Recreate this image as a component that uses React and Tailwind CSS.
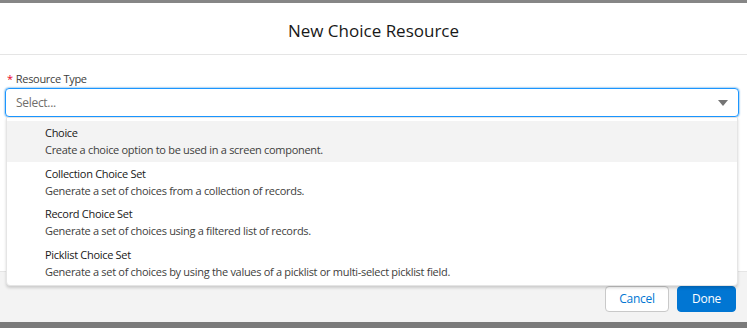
import React from "react";

const options = [
  { t: "Choice", d: "Create a choice option to be used in a screen component.", active: true },
  { t: "Collection Choice Set", d: "Generate a set of choices from a collection of records." },
  { t: "Record Choice Set", d: "Generate a set of choices using a filtered list of records." },
  { t: "Picklist Choice Set", d: "Generate a set of choices by using the values of a picklist or multi-select picklist field." },
];

export default function App() {
  return (
    <div className="w-[747px] h-[328px] flex flex-col bg-white overflow-hidden" style={{ fontFamily: '"Open Sans", sans-serif' }}>
      <div className="h-[3px] bg-[#868686]" />
      <div className="h-[52px] flex items-center justify-center border-b border-[#e5e5e5]">
        <h1 className="text-[17px] text-[#181818] leading-none mt-[3px]">New Choice Resource</h1>
      </div>
      <div className="flex-1 px-[5px] pt-[16px] relative">
        <div className="text-[11px] tracking-[-0.3px] text-[#3e3e3c] leading-[16px] flex items-center pl-[2px]">
          <span className="text-[#ea001e] mr-[3px]">*</span>Resource Type
        </div>
        <div className="relative mt-[1px] w-[734px]">
          <div className="h-[29px] border border-[#1b96ff] rounded-[4px] shadow-[0_0_2px_#0176d3] flex items-center justify-between pl-[10px] pr-[9px]">
            <span className="text-[12px] tracking-[-0.3px] text-[#706e6b]">Select...</span>
            <svg width="12" height="8" viewBox="0 0 12 8"><path d="M1 1h10L6 7z" fill="#747474" /></svg>
          </div>
          <div className="absolute left-[1px] top-[29px] w-[732px] bg-white border border-[#e5e5e5] rounded-b-[4px] shadow-[0_2px_3px_rgba(0,0,0,0.16)] pt-[3px] pb-[2px] z-10">
            {options.map((o) => (
              <div key={o.t} className={`h-[40.5px] pl-[38px] pt-[1px] flex flex-col justify-center ${o.active ? "bg-[#f3f3f3]" : ""}`}>
                <div className="text-[11px] tracking-[-0.3px] leading-[16px] text-[#181818]">{o.t}</div>
                <div className="text-[11px] tracking-[-0.3px] leading-[17px] text-[#3e3e3c]">{o.d}</div>
              </div>
            ))}
          </div>
        </div>
      </div>
      <div className="h-[51px] bg-[#f3f3f3] border-t border-[#e5e5e5] flex items-center justify-end gap-[8px] pr-[11px] pt-[3px]">
        <button className="h-[26px] w-[64px] bg-white border border-[#c9c9c9] rounded-[4px] text-[12px] tracking-[-0.3px] text-[#0176d3]">Cancel</button>
        <button className="h-[26px] w-[59px] bg-[#0176d3] border border-[#0176d3] rounded-[4px] text-[12px] tracking-[-0.3px] text-white">Done</button>
      </div>
      <div className="h-[6px] bg-[#7a7a7a]" />
    </div>
  );
}
